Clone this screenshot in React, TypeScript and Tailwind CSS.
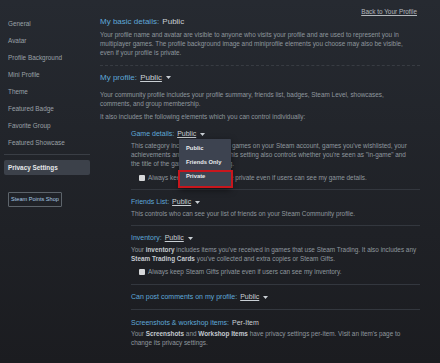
import React from 'react';

const sideItems = [
  'General',
  'Avatar',
  'Profile Background',
  'Mini Profile',
  'Theme',
  'Featured Badge',
  'Favorite Group',
  'Featured Showcase',
];

function Caret() {
  return (
    <svg width="5" height="3" viewBox="0 0 5 3" className="inline-block ml-[4px] align-middle">
      <path d="M0 0h5L2.5 3z" fill="#c9cfd4" />
    </svg>
  );
}

function Lines({ lines, className = '' }: { lines: React.ReactNode[]; className?: string }) {
  return (
    <div className={`text-[6.4px] leading-[9px] text-[#8f979e] ${className}`}>
      {lines.map((l, i) => (
        <span key={i} className="block whitespace-nowrap">
          {l}
        </span>
      ))}
    </div>
  );
}

function SubHeading({ label, value, caret = true }: { label: string; value: string; caret?: boolean }) {
  return (
    <h3 className="h-[12px] leading-[12px] text-[7px] text-[#5fa8d8] whitespace-nowrap">
      {label}{' '}
      <span className={`ml-[1px] text-[#c9cfd4] ${caret ? 'underline' : ''}`}>{value}</span>
      {caret ? <Caret /> : null}
    </h3>
  );
}

function CheckRow({ text }: { text: string }) {
  return (
    <div className="flex items-center h-[9px] pl-[8px] text-[6.4px] text-[#8f979e] whitespace-nowrap">
      <span className="w-[6px] h-[6px] bg-[#d6d8da] rounded-[1px] mr-[3px] shrink-0" />
      {text}
    </div>
  );
}

const B = ({ children }: { children: React.ReactNode }) => (
  <span className="font-bold text-[#c3c9cf]">{children}</span>
);

export default function App() {
  return (
    <div className="w-[440px] h-[363px] overflow-hidden flex bg-linear-to-b from-[#262a31] to-[#1b1c20] font-['Liberation_Sans',Arial,sans-serif]">
      <aside className="w-[100px] shrink-0 pl-1 pr-[10px] pt-[15px]">
        {sideItems.map((s) => (
          <div key={s} className="h-[17px] leading-[17px] pl-1 text-[6.4px] text-[#9ba1a7]">
            {s}
          </div>
        ))}
        <div className="mt-[3px] h-px bg-[#3a3e45]" />
        <div className="mt-[5px] h-[15px] leading-[15px] pl-1 rounded-[2px] bg-[#3c414a] text-[6.4px] font-semibold text-[#e6e8ea]">
          Privacy Settings
        </div>
        <div className="mt-[17px] ml-1 w-[54px] h-[15px] flex items-center justify-center border border-[#5d646b] rounded-[1px] text-[5.6px] text-[#a9cbe4] whitespace-nowrap">
          Steam Points Shop
        </div>
      </aside>

      <main className="w-[320px] pt-[7px]">
        <div className="flex justify-end pr-[3px] h-[10px] leading-[10px]">
          <a className="text-[6.4px] underline text-[#b3b8bd]">Back to Your Profile</a>
        </div>

        <h2 className="mt-[-1px] h-[12px] leading-[12px] text-[8px] text-[#5fa8d8] whitespace-nowrap">
          My basic details: <span className="ml-[1px] text-[#c9cfd4]">Public</span>
        </h2>
        <Lines
          className="mt-[2px]"
          lines={[
            'Your profile name and avatar are visible to anyone who visits your profile and are used to represent you in',
            'multiplayer games. The profile background image and miniprofile elements you choose may also be visible,',
            'even if your profile is private.',
          ]}
        />
        <div className="mt-[8px] border-t border-dashed border-[#383c43]" />

        <h2 className="mt-[6px] h-[12px] leading-[12px] text-[8px] text-[#5fa8d8] whitespace-nowrap">
          My profile: <span className="ml-[1px] text-[#c9cfd4] underline">Public</span>
          <Caret />
        </h2>
        <Lines
          className="mt-[6px]"
          lines={[
            'Your community profile includes your profile summary, friends list, badges, Steam Level, showcases,',
            'comments, and group membership.',
          ]}
        />
        <Lines className="mt-[4px]" lines={['It also includes the following elements which you can control individually:']} />

        <div className="pl-[31px]">
          <div className="relative mt-[7px]">
            <SubHeading label="Game details:" value="Public" />
            <div className="absolute left-[48px] top-[11px] w-[52px] h-[49px] bg-[#3d4350] rounded-[1px] shadow-[0_2px_6px_rgba(0,0,0,0.5)] z-10 pt-[2px]">
              {['Public', 'Friends Only', 'Private'].map((o) => (
                <div key={o} className="h-[14px] leading-[14px] pl-[7px] text-[5.8px] font-bold text-[#e8eaec]">
                  {o}
                </div>
              ))}
              <div className="absolute left-[-1px] right-[-2px] top-[31px] bottom-0 border-2 border-[#c8161d]" />
            </div>
          </div>
          <Lines
            className="mt-[1px]"
            lines={[
              "This category includes the list of all games on your Steam account, games you've wishlisted, your",
              'achievements and your playtime. This setting also controls whether you\'re seen as "in-game" and',
              'the title of the game you are playing.',
            ]}
          />
          <div className="mt-[5px]">
            <CheckRow text="Always keep my total playtime private even if users can see my game details." />
          </div>
          <div className="mt-[7px] h-px bg-[#33373e]" />

          <div className="mt-[6px]">
            <SubHeading label="Friends List:" value="Public" />
          </div>
          <Lines className="mt-[1px]" lines={['This controls who can see your list of friends on your Steam Community profile.']} />
          <div className="mt-[7px] h-px bg-[#33373e]" />

          <div className="mt-[6px]">
            <SubHeading label="Inventory:" value="Public" />
          </div>
          <Lines
            className="mt-[1px]"
            lines={[
              <>
                Your <B>inventory</B> includes items you've received in games that use Steam Trading. It also includes any
              </>,
              <>
                <B>Steam Trading Cards</B> you've collected and extra copies or Steam Gifts.
              </>,
            ]}
          />
          <div className="mt-[4px]">
            <CheckRow text="Always keep Steam Gifts private even if users can see my inventory." />
          </div>
          <div className="mt-[8px] h-px bg-[#33373e]" />

          <div className="mt-[6px]">
            <SubHeading label="Can post comments on my profile:" value="Public" />
          </div>
          <div className="mt-[6px] h-px bg-[#33373e]" />

          <div className="mt-[7px]">
            <SubHeading label="Screenshots & workshop items:" value="Per-Item" caret={false} />
          </div>
          <Lines
            lines={[
              <>
                Your <B>Screenshots</B> and <B>Workshop Items</B> have privacy settings per-item. Visit an item's page to
              </>,
              'change its privacy settings.',
            ]}
          />
        </div>
      </main>
    </div>
  );
}
